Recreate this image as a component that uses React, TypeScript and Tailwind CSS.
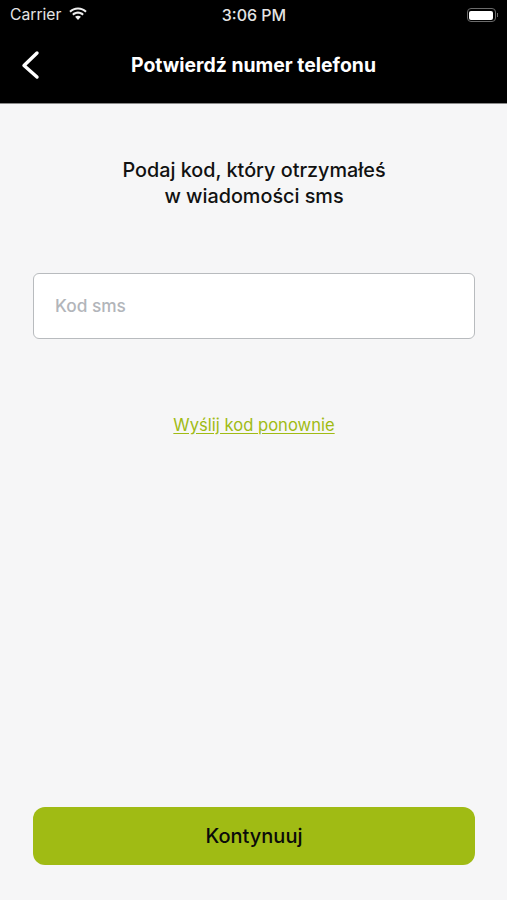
const font = "font-['Inter','Liberation_Sans',sans-serif]";

const WifiIcon = () => (
  <svg width="20" height="15" viewBox="0 0 20 15" fill="#eeeeee">
    <path d="M10 2.600c2.800 0 5.400 1.100 7.300 2.900l1.400-1.500C16.400 1.800 13.400.5 10 .5S3.600 1.800 1.300 4l1.400 1.500C4.600 3.700 7.200 2.600 10 2.600z" />
    <path d="M10 6.700c1.700 0 3.200.6 4.400 1.700l1.400-1.500C14.200 5.500 12.200 4.600 10 4.600s-4.200.9-5.800 2.300l1.400 1.500C6.800 7.300 8.300 6.700 10 6.700z" />
    <path d="M10 8.700c-1.100 0-2.100.4-2.900 1.100L10 13l2.900-3.200c-.8-.7-1.800-1.100-2.900-1.100z" />
  </svg>
);

const BatteryIcon = () => (
  <div className="flex items-center">
    <div className="h-[14px] w-[29px] rounded-[4px] border border-[#6b6b6b] p-[1.5px]">
      <div className="h-full w-full rounded-[2px] bg-white" />
    </div>
    <div className="ml-[1px] h-[4px] w-[1px] bg-[#6b6b6b]" />
  </div>
);

const BackIcon = () => (
  <svg
    className="absolute left-[20px] top-[20px]"
    width="20"
    height="30"
    viewBox="0 0 20 30"
    fill="none"
    stroke="white"
    strokeWidth="3.4"
    strokeLinecap="round"
    strokeLinejoin="round"
  >
    <path d="M17 3 L4 15.500 L17 27" />
  </svg>
);

export default function App() {
  return (
    <div className={`flex h-[900px] w-[507px] flex-col overflow-hidden bg-[#f6f6f7] ${font}`}>
      {/* Status bar + nav */}
      <div className="h-[104px] shrink-0 border-b border-[#8a8a8a] bg-black">
        <div className="flex h-[30px] items-center justify-between pl-[10px] pr-[9px] text-[#e4e4e4]">
          <div className="flex w-[120px] items-center gap-[7px] text-[15.700px]">
            <span>Carrier</span>
            <WifiIcon />
          </div>
          <span className="text-[16px] font-medium">3:06 PM</span>
          <div className="flex w-[120px] justify-end">
            <BatteryIcon />
          </div>
        </div>
        <div className="relative flex h-[70px] items-center justify-center pt-[2px]">
          <BackIcon />
          <h1 className="text-[19.400px] font-bold text-white">Potwierdź numer telefonu</h1>
        </div>
      </div>

      {/* Content */}
      <div className="flex flex-1 flex-col pb-[35px] pl-[33px] pr-[32px]">
        <p className="mt-[53px] text-center text-[19.800px] font-medium leading-[26px] text-[#111]">
          Podaj kod, który otrzymałeś
          <br />w wiadomości sms
        </p>

        <div className="mt-[64px] flex h-[66px] items-center rounded-[6px] border-[1.5px] border-[#b8bbbe] bg-white px-[21px] text-[17.300px] font-medium text-[#b2b5ba]">
          Kod sms
        </div>

        <a className="mt-[74px] self-center text-[16.600px] text-[#a0bb14] underline underline-offset-2">
          Wyślij kod ponownie
        </a>

        <button className="mt-auto flex h-[58px] items-center justify-center rounded-[12px] bg-[#a0bb14] text-[20px] font-medium text-[#0a0a0a]">
          Kontynuuj
        </button>
      </div>
    </div>
  );
}
